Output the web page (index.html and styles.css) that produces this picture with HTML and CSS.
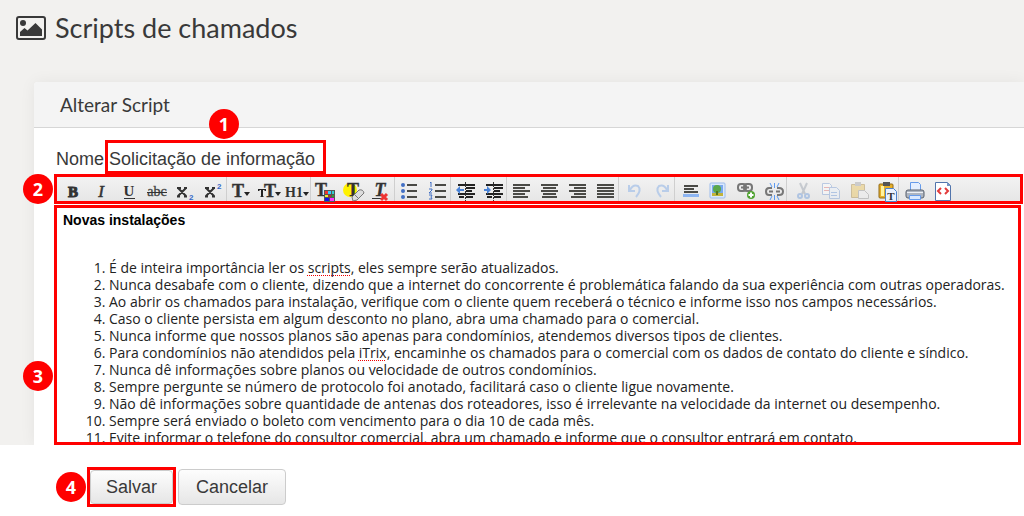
FILE: index.html
```html
<!DOCTYPE html>
<html lang="pt-BR">
<head>
<meta charset="utf-8">
<meta name="viewport" content="width=device-width, initial-scale=1">
<title>Scripts de chamados</title>
<link rel="stylesheet" href="styles.css">
</head>
<body>
<main class="page">
  <h1 class="page-title">
    <svg class="page-icon" viewBox="0 0 30 24" aria-hidden="true">
      <rect x="1" y="1" width="28" height="22" rx="2" fill="none" stroke="#393939" stroke-width="2"/>
      <circle cx="7" cy="7" r="3" fill="#393939"/>
      <path d="M4 20v-4l4.500-4 3 2.500L19.500 7 26 13.500V20z" fill="#393939"/>
    </svg>
    Scripts de chamados
  </h1>
  <section class="card">
    <h2 class="card-header">Alterar Script</h2>
    <div class="card-body">
      <div class="name-row">
        <label for="nome">Nome</label>
        <div class="mark">
          <input class="name-input" id="nome" type="text" value="Solicitação de informação">
          <span class="badge badge-name">1</span>
        </div>
      </div>
      <div class="mark toolbar" role="toolbar" aria-label="Formatação">
        <span class="badge badge-left">2</span>
        <button class="tool" type="button" aria-label="Negrito"><svg viewBox="0 0 24 24"><text class="g heavy" x="12" y="18" font-size="15">B</text></svg></button>
        <button class="tool" type="button" aria-label="Itálico"><svg viewBox="0 0 24 24"><text class="g italic thin" x="12" y="18" font-size="17" stroke="#333" stroke-width=".5">I</text></svg></button>
        <button class="tool" type="button" aria-label="Sublinhado"><svg viewBox="0 0 24 24"><text class="g" x="12" y="17" font-size="15">U</text><path class="ink" d="M7 19.500h11"/></svg></button>
        <button class="tool" type="button" aria-label="Tachado"><svg viewBox="0 0 24 24"><text class="g thin" x="12" y="17" font-size="14" stroke="#555" stroke-width=".3">abc</text><path class="ink" d="M2 13.500h20"/></svg></button>
        <button class="tool" type="button" aria-label="Subscrito"><svg viewBox="0 0 24 24"><path class="x" d="M5 9l8 8M13 9l-8 8M4 9h4M11 9h3M4 17.500h3M11 17.500h3"/><text class="num" x="16" y="21">2</text></svg></button>
        <button class="tool" type="button" aria-label="Sobrescrito"><svg viewBox="0 0 24 24"><path class="x" d="M5 9l8 8M13 9l-8 8M4 9h4M11 9h3M4 17.500h3M11 17.500h3"/><text class="num" x="16" y="10">2</text></svg></button>
        <button class="tool sep" type="button" aria-label="Fonte"><svg viewBox="0 0 24 24"><text class="g stout" x="9" y="18" font-size="18">T</text><path class="fill" d="M15 13h6l-3 4z"/></svg></button>
        <button class="tool" type="button" aria-label="Tamanho"><svg viewBox="0 0 24 24"><path class="fill" d="M1 10h8v2H8l-1-1H6v6l1 1H3l1-1v-6H3l-1 1H1z"/><text class="g stout" x="13" y="18" font-size="18">T</text><path class="fill" d="M18 13h6l-3 4z"/></svg></button>
        <button class="tool" type="button" aria-label="Título"><svg viewBox="0 0 24 24"><text class="g" x="9" y="18" font-size="14">H1</text><path class="fill" d="M18 13h6l-3 4z"/></svg></button>
        <button class="tool sep" type="button" aria-label="Cor do texto"><svg viewBox="0 0 24 24"><text class="g stout" x="8" y="17" font-size="18">T</text><path fill="#555" d="M11 11h11v12H11z"/><path fill="#e33" d="M12 12h3v3h-3z"/><path fill="#3cf" d="M15 12h3v3h-3z"/><path fill="#3cc" d="M19 12h2v3h-2z"/><path fill="#ee3" d="M12 16h3v2h-3z"/><path fill="#a33" d="M15 16h3v2h-3z"/><path fill="#393" d="M19 16h2v2h-2z"/><path fill="#11e" d="M12 19h4v3h-4z"/><path fill="#f3f" d="M17 19h4v3h-4z"/></svg></button>
        <button class="tool" type="button" aria-label="Realce"><svg viewBox="0 0 24 24"><circle cx="9" cy="11" r="7" fill="#fff200"/><text class="g stout" x="12" y="17" font-size="18">T</text><path fill="#ddd" stroke="#777" d="M11 18l7-7q4-1 5 3l-7 7-4 1z"/><path stroke="#777" fill="none" d="M14 16l4 4"/></svg></button>
        <button class="tool" type="button" aria-label="Remover formatação"><svg viewBox="0 0 24 24"><text class="g italic stout" x="11" y="17" font-size="18">T</text><path class="ink" d="M3 19.500h9"/><path stroke="#e33" stroke-width="3" d="M12 15l6 6M18 15l-6 6"/></svg></button>
        <button class="tool sep" type="button" aria-label="Marcadores"><svg viewBox="0 0 24 24"><g fill="#416fc4"><circle cx="6" cy="6" r="2"/><circle cx="6" cy="12" r="2"/><circle cx="6" cy="18" r="2"/></g><path class="lines" d="M10 6h10M10 12h10M10 18h10"/></svg></button>
        <button class="tool" type="button" aria-label="Numeração"><svg viewBox="0 0 24 24"><path fill="none" stroke="#416fc4" d="M5 4l1-1v5M4 10h3v1l-3 3h3M4 16h3l-1 2 1 2H4"/><path class="lines" d="M10 6h11M10 12h11M10 18h11"/></svg></button>
        <button class="tool sep" type="button" aria-label="Diminuir recuo"><svg viewBox="0 0 24 24"><path class="lines dark" d="M5 6h17M13 9h9M13 12h6M5 15h17M6 18h5M13 18h7"/><path stroke="#333" stroke-dasharray="2 1" d="M12.500 3v19"/><path fill="#4983d8" d="M3 11l4-4v3h4v2H7v3z"/></svg></button>
        <button class="tool" type="button" aria-label="Aumentar recuo"><svg viewBox="0 0 24 24"><path class="lines dark" d="M5 6h17M13 9h9M13 12h6M5 15h17M6 18h5M13 18h7"/><path stroke="#333" stroke-dasharray="2 1" d="M12.500 3v19"/><path fill="#4983d8" d="M10 11L6 7v3H3v2h3v3z"/></svg></button>
        <button class="tool sep" type="button" aria-label="Alinhar à esquerda"><svg viewBox="0 0 24 24"><path class="lines" d="M4 6h17M4 9h12M4 12h17M4 15h12M4 18h15"/></svg></button>
        <button class="tool" type="button" aria-label="Centralizar"><svg viewBox="0 0 24 24"><path class="lines" d="M4 6h17M6 9h13M4 12h17M6 15h13M5 18h15"/></svg></button>
        <button class="tool" type="button" aria-label="Alinhar à direita"><svg viewBox="0 0 24 24"><path class="lines" d="M4 6h17M9 9h12M4 12h17M9 15h12M6 18h15"/></svg></button>
        <button class="tool" type="button" aria-label="Justificar"><svg viewBox="0 0 24 24"><path class="lines" d="M4 6h17M4 9h17M4 12h17M4 15h17M4 18h17"/></svg></button>
        <button class="tool sep" type="button" aria-label="Desfazer"><svg viewBox="0 0 24 24"><path class="undo" d="M8 6v6h6M9 11q3-6 8-4 4 4-2 11"/></svg></button>
        <button class="tool" type="button" aria-label="Refazer"><svg viewBox="0 0 24 24"><path class="undo" d="M19 6v6h-6M18 11q-3-6-8-4-4 4 2 11"/></svg></button>
        <button class="tool sep" type="button" aria-label="Linha horizontal"><svg viewBox="0 0 24 24"><path class="lines" d="M7 7h14M7 10h10M7 13h14"/><path fill="#8db5f2" d="M6 15h16v3H6z"/></svg></button>
        <button class="tool" type="button" aria-label="Imagem"><svg viewBox="0 0 24 24"><rect x="5" y="4" width="15" height="15" rx="1" fill="#dce9fb" stroke="#9dbcec"/><path fill="#79a9ee" d="M7 6h11v11H7z"/><path fill="#c2b33a" d="M7 14h11v3H7z"/><circle cx="12" cy="10" r="4" fill="#5aa84a"/><path stroke="#54751b" stroke-width="2" d="M12 12v4"/></svg></button>
        <button class="tool" type="button" aria-label="Inserir link"><svg viewBox="0 0 24 24"><g class="chain"><rect x="5" y="5" width="8" height="7" rx="3"/><rect x="11" y="5" width="8" height="7" rx="3"/><path d="M8 8.500h8"/></g><circle cx="18" cy="16" r="4" fill="#51a332"/><path stroke="#fff" stroke-width="2" d="M15.500 16h5M18 13.500v5"/></svg></button>
        <button class="tool" type="button" aria-label="Remover link"><svg viewBox="0 0 24 24"><g class="chain"><path d="M11 9H8Q5 9 5 12.500T8 16h3M16 9h2q4 0 4 3.500T18 16h-2M8 12.500h4M15 12.500h4"/></g><path fill="none" stroke="#5b9af2" d="M13.500 4v5M9 4l2 4M18 4l-2 4M13.500 16v5M9 21l2-4M18 21l-2-4"/></svg></button>
        <button class="tool sep" type="button" aria-label="Recortar"><svg class="faded" viewBox="0 0 24 24"><path stroke="#8b95a3" stroke-width="2" d="M11 4l5 11M18 4l-5 11"/><g fill="none" stroke="#5c8fd8" stroke-width="2"><circle cx="11" cy="17" r="2"/><circle cx="18" cy="17" r="2"/></g></svg></button>
        <button class="tool" type="button" aria-label="Copiar"><svg class="faded" viewBox="0 0 24 24"><path fill="#fff" stroke="#6d93d0" d="M5.500 4.500h7l2 2v9h-9z"/><path stroke="#d66" d="M7 8.500h6M7 11.500h6"/><path fill="#eaf1fc" stroke="#6d93d0" d="M12.500 8.500h7l3 3v8h-10z"/><path stroke="#5c8fd8" d="M14 13.500h6M14 16.500h6"/></svg></button>
        <button class="tool" type="button" aria-label="Colar"><svg class="faded" viewBox="0 0 24 24"><path fill="#e9bd45" stroke="#a07a24" d="M6.500 5.500h13v13h-13z"/><path fill="#999" d="M10 3h6v4h-6z"/><path fill="#eee" stroke="#888" d="M13.500 11.500h6l4 4v4h-10z"/></svg></button>
        <button class="tool" type="button" aria-label="Colar texto"><svg viewBox="0 0 24 24"><rect x="6" y="5" width="14" height="14" rx="1" fill="#e7af28" stroke="#916a18"/><path fill="#fff3a0" d="M8 7h3v10H8z"/><path fill="#555" d="M10 3h7v4h-7z"/><path fill="#e9f1fe" stroke="#4f83cc" d="M12.500 9.500h8l3 3v10h-11z"/><text class="g" x="18" y="21" font-size="11">T</text></svg></button>
        <button class="tool sep" type="button" aria-label="Imprimir"><svg viewBox="0 0 24 24"><path fill="#e5effe" stroke="#669bea" d="M9.500 12V3.500h8l2 2V12z"/><rect x="5" y="11" width="18" height="8" rx="2" fill="#aeb5c0" stroke="#59616d"/><path stroke="#eef1f5" d="M6 13.500h16"/><path fill="#d9e8ff" stroke="#669bea" d="M8.500 16.500h11v4h-11z"/></svg></button>
        <button class="tool" type="button" aria-label="Código-fonte"><svg viewBox="0 0 24 24"><path fill="#fff" stroke="#5275ac" d="M6.500 3.500h12l3 3v15h-15z"/><path fill="#7795c3" d="M18 3v4h4z"/><path fill="none" stroke="#e33b3b" stroke-width="2" d="M12 9l-3 3 3 3M16 9l3 3-3 3"/></svg></button>
      </div>
      <div class="mark editor">
        <span class="badge badge-left badge-editor">3</span>
        <div class="editor-content" contenteditable="true" spellcheck="false" role="textbox" aria-multiline="true" aria-label="Texto do script">
          <p class="heading"><b>Novas instalações</b></p>
          <ol class="rules">
            <li>É de inteira importância ler os <span class="misspelled">scripts</span>, eles sempre serão atualizados.</li>
            <li>Nunca desabafe com o cliente, dizendo que a internet do concorrente é problemática falando da sua experiência com outras operadoras.</li>
            <li>Ao abrir os chamados para instalação, verifique com o cliente quem receberá o técnico e informe isso nos campos necessários.</li>
            <li>Caso o cliente persista em algum desconto no plano, abra uma chamado para o comercial.</li>
            <li>Nunca informe que nossos planos são apenas para condomínios, atendemos diversos tipos de clientes.</li>
            <li>Para condomínios não atendidos pela <span class="misspelled">iTrix</span>, encaminhe os chamados para o comercial com os dados de contato do cliente e síndico.</li>
            <li>Nunca dê informações sobre planos ou velocidade de outros condomínios.</li>
            <li>Sempre pergunte se número de protocolo foi anotado, facilitará caso o cliente ligue novamente.</li>
            <li>Não dê informações sobre quantidade de antenas dos roteadores, isso é irrelevante na velocidade da internet ou desempenho.</li>
            <li>Sempre será enviado o boleto com vencimento para o dia 10 de cada mês.</li>
            <li>Evite informar o telefone do consultor comercial, abra um chamado e informe que o consultor entrará em contato.</li>
          </ol>
        </div>
      </div>
    </div>
  </section>
</main>
<footer class="actions">
  <div class="mark">
    <span class="badge badge-left">4</span>
    <button class="btn btn-save" type="submit">Salvar</button>
  </div>
  <button class="btn" type="button">Cancelar</button>
</footer>
</body>
</html>
```
FILE: styles.css
```css
* {
  box-sizing: border-box;
}

body {
  margin: 0;
  background: #fff;
  color: #393939;
  font-family: "Liberation Sans", Arial, sans-serif;
  font-size: 18px;
}

.page {
  padding-left: 34px;
  overflow: hidden;
  background: #f2f1ef;
}

.page-title {
  display: flex;
  align-items: center;
  gap: 9px;
  height: 82px;
  margin: 0 0 0 -18px;
  padding-bottom: 27px;
  font: 400 27px/32px Lato, sans-serif;
}

.page-icon {
  width: 30px;
  height: 24px;
}

.card {
  background: #fff;
  border-radius: 4px 0 0 0;
  box-shadow: 0 0 16px rgba(0, 0, 0, 0.06);
}

.card-header {
  margin: 0;
  padding: 11px 26px;
  border-bottom: 1px solid #d6d6d6;
  border-radius: 4px 0 0 0;
  background: #f4f4f4;
  font: 400 19px/23px Lato, sans-serif;
}

.card-body {
  padding: 12px 0 0 20px;
}

.name-row {
  display: flex;
  align-items: center;
  padding-left: 2px;
}

.name-row label {
  width: 49px;
  padding-top: 4px;
}

.mark {
  position: relative;
  border: 3px solid #f00;
}

.name-input {
  display: block;
  width: 215px;
  height: 28px;
  padding: 4px 1px 0;
  border: 0;
  outline: 0;
  background: #fff;
  color: inherit;
  font: inherit;
}

.badge {
  position: absolute;
  display: flex;
  align-items: center;
  justify-content: center;
  width: 30px;
  height: 30px;
  border-radius: 50%;
  background: #f00;
  color: #fff;
  font: 700 18px/20px "Open Sans", sans-serif;
}

.badge-name {
  top: -34px;
  left: 101px;
}

.badge-left {
  top: 50%;
  right: 100%;
  margin-right: 4px;
  transform: translateY(-50%);
}

.badge-editor {
  top: 72%;
}

.toolbar {
  display: flex;
  height: 30px;
  margin-right: 1px;
  padding-left: 2px;
  background: linear-gradient(#f2f2f2, #e6e6e6);
}

.tool {
  display: flex;
  flex: none;
  justify-content: center;
  width: 28px;
  padding: 2px 0 0;
  border: 0;
  background: none;
}

.tool.sep {
  box-shadow: -1px 0 #cfcfcf;
}

.tool svg {
  display: block;
  flex: none;
  width: 24px;
  height: 24px;
}

.g {
  fill: #333;
  font-family: "Liberation Serif", serif;
  font-weight: 700;
  text-anchor: middle;
}

.heavy {
  stroke: #333;
}

.stout {
  stroke: #333;
  stroke-width: 0.4;
}

.italic {
  font-style: italic;
}

.thin {
  font-weight: 400;
}

.num {
  fill: #3467c8;
  font: 700 8px "Liberation Sans", sans-serif;
}

.ink {
  stroke: #333;
}

.x {
  stroke: #333;
  stroke-width: 2;
}

.fill {
  fill: #222;
}

.lines {
  stroke: #4a4a46;
  stroke-width: 2;
}

.dark {
  stroke: #222;
}

.undo {
  fill: none;
  stroke: #b9cde9;
  stroke-width: 2;
}

.chain {
  fill: none;
  stroke: #777;
  stroke-width: 2;
}

.faded {
  opacity: 0.4;
}

.editor {
  height: 240px;
  margin: 1px 3px 0 0;
}

.editor-content {
  height: 100%;
  padding: 4px 6px 0;
  overflow: hidden;
  outline: 0;
  color: #000;
  font-family: "Open Sans", sans-serif;
  font-size: 14px;
  line-height: 17px;
}

.heading {
  margin: 0 0 30px;
  font-family: "Liberation Sans", Arial, sans-serif;
}

.rules {
  margin: 0;
  padding-left: 46px;
  color: #222;
}

.misspelled {
  text-decoration: underline dotted #e00 1px;
  text-decoration-skip-ink: none;
  text-underline-offset: 2px;
}

.actions {
  display: flex;
  align-items: center;
  gap: 2px;
  padding: 22px 87px 9px;
}

.btn {
  display: block;
  height: 36px;
  padding: 0 17px;
  border: 1px solid #ccc;
  border-radius: 4px;
  background: linear-gradient(#fdfdfd, #e6e6e6);
  color: #393939;
  font: inherit;
}

.btn-save {
  height: 34px;
  padding: 0 15px;
}
```
